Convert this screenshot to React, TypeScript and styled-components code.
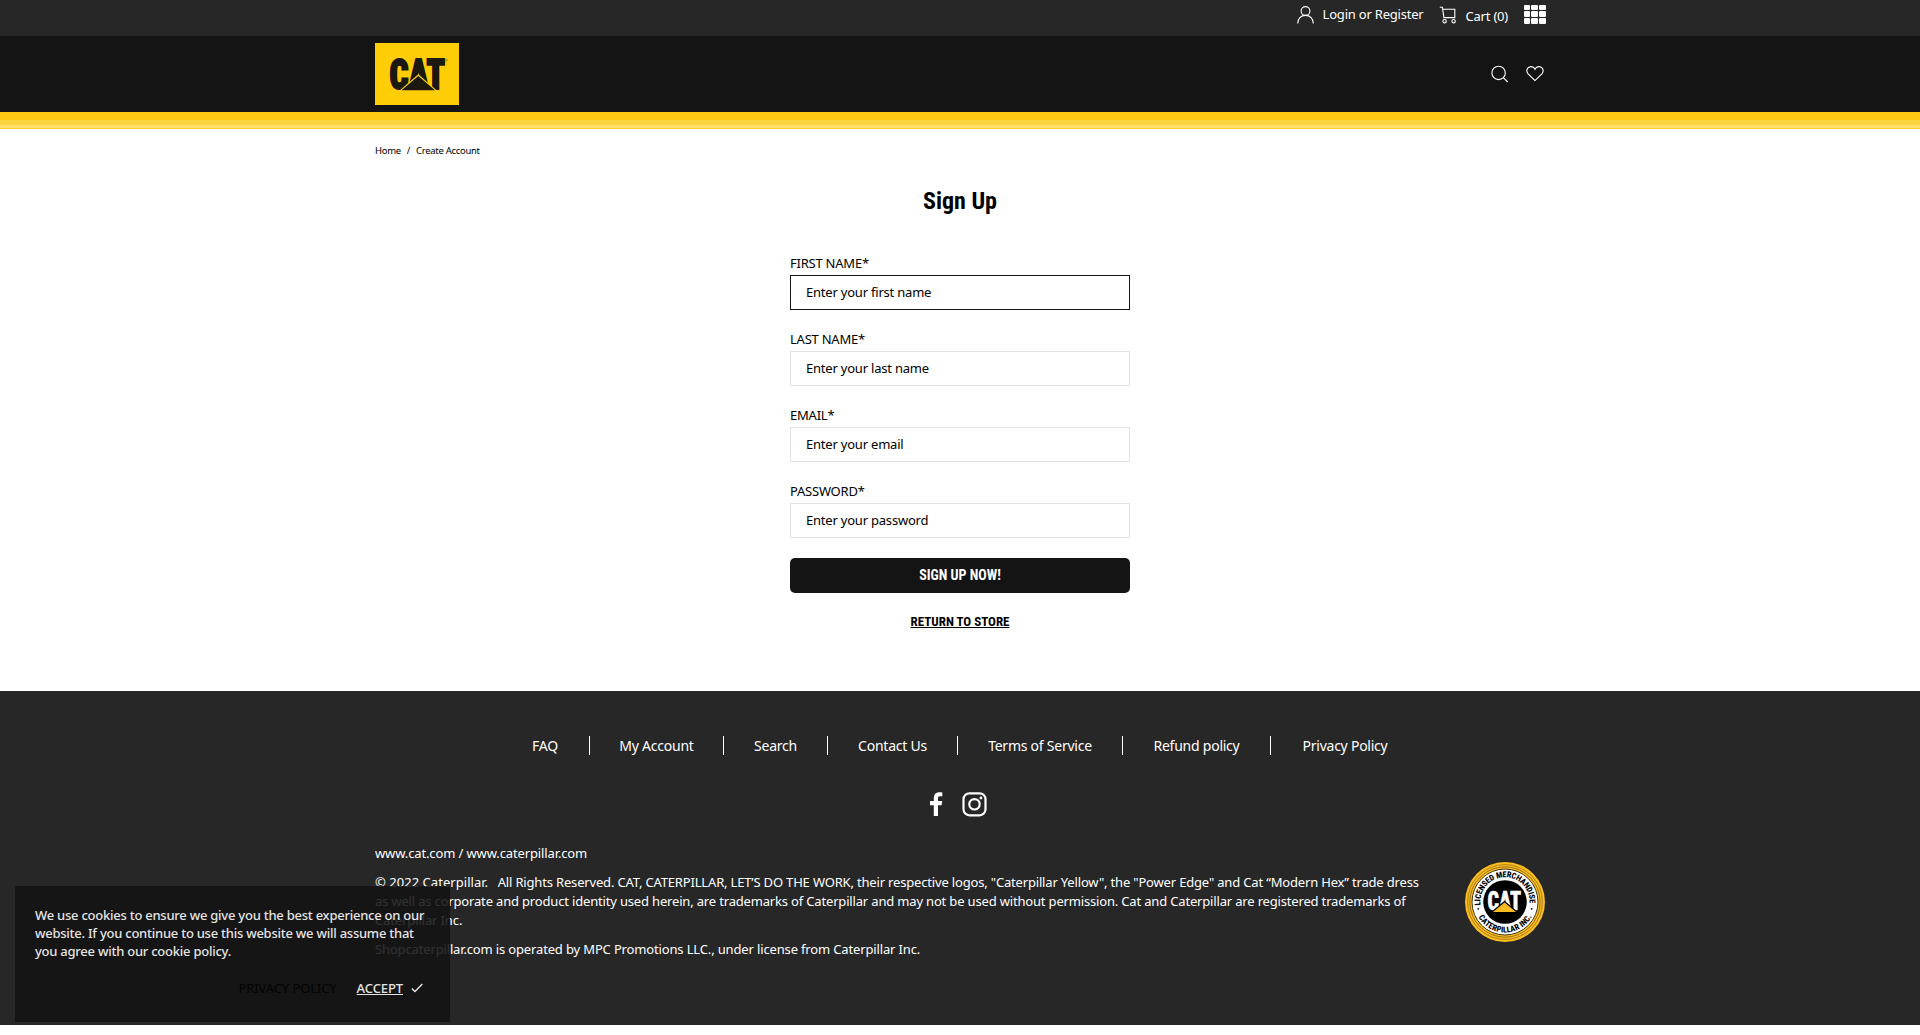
import React from 'react';
import styled, { createGlobalStyle, css } from 'styled-components';

const GlobalStyle = createGlobalStyle`
  * { box-sizing: border-box; }
  body {
    margin: 0;
    background: #fff;
    color: #000;
    font: 13px/19px "Noto Sans", "Open Sans", sans-serif;
    letter-spacing: -0.21px;
    overflow: hidden;
  }
  a { color: inherit; text-decoration: none; }
  p { margin: 0; }
`;

const condensed = css`
  font-family: "Roboto Condensed", Roboto, sans-serif;
  font-weight: 700;
  letter-spacing: 0;
`;

const Container = styled.div`
  width: 1170px;
  margin: 0 auto;
`;

const TopBar = styled.div`
  height: 36px;
  background: #272727;
  color: #fff;
`;

const TopBarInner = styled(Container)`
  height: 36px;
  display: flex;
  justify-content: flex-end;
  align-items: flex-start;
  padding-top: 5px;
`;

const TopLink = styled.a<{ $gap: number; $drop?: number; $after: number }>`
  display: flex;
  align-items: flex-start;
  gap: ${p => p.$gap}px;
  margin-right: ${p => p.$after}px;
  white-space: nowrap;
  svg { display: block; }
  span { padding-top: ${p => p.$drop ?? 0}px; }
`;

const Apps = styled.div`
  margin-right: -1px;
  display: grid;
  grid-template-columns: 6px 7px 7px;
  grid-template-rows: 5px 6px 6px;
  gap: 1px;
  i { background: #fff; border-radius: 1px; }
`;

const Header = styled.header`
  height: 76px;
  background: #141414;
  color: #fff;
`;

const HeaderInner = styled(Container)`
  height: 76px;
  display: flex;
  justify-content: space-between;
  align-items: center;
`;

const Logo = styled.a`
  width: 84px;
  height: 62px;
  margin-top: -1px;
  background: #ffcd05;
  svg { display: block; }
`;

const HeaderIcons = styled.div`
  display: flex;
  gap: 17px;
  margin: -1px 1px 0 0;
  svg { display: block; }
`;

const Stripes = styled.div`
  height: 17px;
  display: grid;
  grid-template-rows: 8px 5px 3px 1px;
  i:nth-child(1) { background: #ffcb12; }
  i:nth-child(2) { background: #fcd43f; }
  i:nth-child(3) { background: #ffe070; }
  i:nth-child(4) { background: #fdcf2c; }
`;

const Breadcrumbs = styled(Container)`
  display: flex;
  gap: 6px;
  padding-top: 14px;
  font-size: 9.5px;
  line-height: 16px;
  letter-spacing: -0.3px;
`;

const Main = styled.main`
  height: 562px;
`;

const SignUp = styled.form`
  width: 340px;
  margin: 0 auto;
  padding-top: 26px;
  display: flex;
  flex-direction: column;
`;

const Title = styled.h1`
  ${condensed}
  margin: 0 0 37px;
  font-size: 24px;
  line-height: 32px;
  text-align: center;
`;

const Field = styled.label`
  display: block;
  margin-bottom: 20px;
  line-height: 19px;
  letter-spacing: -0.23px;
`;

const Input = styled.input<{ $active?: boolean }>`
  display: block;
  width: 100%;
  height: 35px;
  margin-top: 2px;
  padding: 0 15px 1px;
  border: 1px solid ${p => (p.$active ? '#141414' : '#e3e3e3')};
  border-radius: 0;
  outline: none;
  background: #fff;
  font: inherit;
  letter-spacing: -0.21px;
  &::placeholder { color: #000; opacity: 1; }
`;

const Submit = styled.button`
  ${condensed}
  height: 35px;
  padding: 0 0 1px;
  border: 0;
  border-radius: 5px;
  background: #141414;
  color: #fff;
  font-size: 14px;
`;

const Return = styled.a`
  ${condensed}
  align-self: center;
  margin-top: 19px;
  font-size: 13px;
  text-decoration: underline;
`;

const Footer = styled.footer`
  height: 334px;
  padding-top: 45px;
  background: #272727;
  color: #fff;
`;

const FooterNav = styled.nav`
  display: flex;
  justify-content: center;
  font-size: 14px;
  letter-spacing: -0.24px;
`;

const FooterLink = styled.a<{ $width: number }>`
  width: ${p => p.$width}px;
  line-height: 19px;
  text-align: center;
  white-space: nowrap;
  & + & { border-left: 1px solid #fff; }
`;

const Social = styled.div`
  display: flex;
  justify-content: center;
  gap: 19px;
  height: 26px;
  margin-top: 37px;
  padding-right: 4px;
  svg { display: block; }
`;

const Legal = styled(Container)`
  display: flex;
  justify-content: space-between;
  margin-top: 26px;
`;

const Copy = styled.div`
  white-space: pre;
  p + p { margin-top: 10px; }
`;

const Run = styled.span<{ $track: number }>`
  letter-spacing: ${p => p.$track}px;
`;

const Seal = styled.svg`
  display: block;
  margin-top: 18px;
`;

const Cookie = styled.aside`
  position: fixed;
  left: 15px;
  top: 886px;
  width: 435px;
  height: 136px;
  padding: 20px;
  background: #141414;
  color: #fff;
  opacity: 0.88;
  font-weight: 500;
  line-height: 18px;
  letter-spacing: -0.245px;
  white-space: nowrap;
`;

const CookieActions = styled.div`
  display: flex;
  justify-content: flex-end;
  align-items: center;
  margin: 19px 7px 0 0;
`;

const Policy = styled.a`
  margin-right: 20px;
  color: #000;
  font-weight: 400;
  letter-spacing: -0.1px;
`;

const Accept = styled.a`
  margin-right: 8px;
  text-decoration: underline;
  letter-spacing: -0.1px;
`;

const stroke = { fill: 'none', stroke: 'currentColor', strokeWidth: 1.1 } as const;

const UserIcon = () => (
  <svg width="18" height="19" viewBox="0 0 18 19" {...stroke}>
    <circle cx="8.500" cy="6" r="4.400" />
    <path d="M.7 18.600c0-5 3.200-8.200 7.800-8.200s7.800 3.200 7.800 8.200" />
  </svg>
);

const CartIcon = () => (
  <svg width="18" height="19" viewBox="0 0 18 19" {...stroke}>
    <path d="M0.800 2.200h2.600l1.500 10.400h10.900V4.200H3.700" />
    <circle cx="5.600" cy="16.200" r="1.700" />
    <circle cx="14.600" cy="16.200" r="1.700" />
  </svg>
);

const SearchIcon = () => (
  <svg width="18" height="18" viewBox="0 0 18 18" {...stroke}>
    <circle cx="7.600" cy="7.900" r="6.700" />
    <path d="M12.300 12.600l4.400 4.400" />
  </svg>
);

const HeartIcon = () => (
  <svg width="18" height="18" viewBox="0 0 18 18" {...stroke}>
    <path d="M9 15.600L2.100 8.800C-.3 6 1 1.900 4.600 1.600 6.600 1.500 8.200 2.600 9 4.200 9.800 2.600 11.400 1.500 13.400 1.600 17 1.900 18.300 6 15.900 8.800z" />
  </svg>
);

const FacebookIcon = () => (
  <svg width="13" height="24" viewBox="0 0 13 24" fill="#fff">
    <path d="M3.800 24V13.200H0V9h3.800V6.200C3.800 2.200 6 .2 9.500.2c1.300 0 2.300.1 2.800.2v3.900H10c-1.600 0-2 .8-2 2V9h4.200l-.6 4.200H8V24z" />
  </svg>
);

const InstagramIcon = () => (
  <svg width="25" height="25" viewBox="0 0 25 25" fill="none" stroke="#fff" strokeWidth="2.200">
    <rect x="1.500" y="1.300" width="22" height="22" rx="6" />
    <circle cx="12.500" cy="12.300" r="5.200" />
    <circle cx="18.900" cy="6" r="1.400" fill="#fff" stroke="none" />
  </svg>
);

const CatLogo = () => (
  <svg width="84" height="62" viewBox="0 0 84 62">
    <text x="14.500" y="46.300" textLength="55.500" lengthAdjust="spacingAndGlyphs" fontFamily="Roboto Condensed, Roboto, sans-serif" fontWeight="900" fontSize="42.500" letterSpacing="0" fill="#1a1810" stroke="#1a1810" strokeWidth="2">CAT</text>
    <path d="M23.500 48.500L43.300 31.300 63 48.500z" fill="#ffcd05" />
    <path d="M26.500 47.200L43.300 33 60 47.200z" fill="#1a1810" />
    <circle cx="71.500" cy="17" r="1" fill="none" stroke="#8a7010" strokeWidth="0.600" />
  </svg>
);

const SealBadge = () => (
  <Seal width="80" height="80" viewBox="0 0 80 80">
    <defs>
      <path id="sealTop" d="M15.900 44.700A24.600 24.600 0 1 1 64.100 44.700" />
      <path id="sealBottom" d="M10.300 47A30.500 30.500 0 0 0 69.700 47" />
    </defs>
    <circle cx="40" cy="40" r="40" fill="#fbbd1f" />
    <circle cx="40" cy="40" r="37.400" fill="none" stroke="#8a6714" strokeWidth="0.700" />
    <circle cx="40" cy="40" r="35.200" fill="none" stroke="#6d5210" strokeWidth="0.700" />
    <circle cx="40" cy="40" r="33" fill="#fff" stroke="#2a2209" strokeWidth="0.900" />
    <circle cx="40" cy="40" r="21.800" fill="#000" />
    <g fontFamily="Roboto Condensed, Roboto, sans-serif" fontWeight="800" fontSize="8.200" letterSpacing="0" fill="#000">
      <text><textPath href="#sealTop" startOffset="1.500" textLength="82" lengthAdjust="spacing">LICENSED MERCHANDISE</textPath></text>
      <text><textPath href="#sealBottom" startOffset="8.500" textLength="65" lengthAdjust="spacing">CATERPILLAR INC.</textPath></text>
    </g>
    <circle cx="13.300" cy="46.800" r="0.900" />
    <circle cx="66.700" cy="46.800" r="0.900" />
    <text x="22.500" y="47.500" textLength="33.500" lengthAdjust="spacingAndGlyphs" fontFamily="Roboto Condensed, Roboto, sans-serif" fontWeight="900" fontSize="25" letterSpacing="0" fill="#fff" stroke="#fff" strokeWidth="0.600">CAT</text>
    <path d="M26 50L39.500 38.800 53 50z" fill="#000" />
    <path d="M28 50L39.500 40.500 51 50z" fill="#fbbd1f" />
  </Seal>
);

const fields = [
  ['FIRST NAME*', 'Enter your first name'],
  ['LAST NAME*', 'Enter your last name'],
  ['EMAIL*', 'Enter your email'],
  ['PASSWORD*', 'Enter your password'],
];

const footerLinks: [string, number][] = [
  ['FAQ', 88],
  ['My Account', 134],
  ['Search', 104],
  ['Contact Us', 130],
  ['Terms of Service', 165],
  ['Refund policy', 148],
  ['Privacy Policy', 149],
];

export default function App() {
  return (
    <>
      <GlobalStyle />
      <TopBar>
        <TopBarInner>
          <TopLink href="#" $gap={8} $after={16}><UserIcon /><span>Login or Register</span></TopLink>
          <TopLink href="#" $gap={8} $drop={2} $after={16}><CartIcon /><span>Cart (0)</span></TopLink>
          <Apps>{Array.from({ length: 9 }, (_, i) => <i key={i} />)}</Apps>
        </TopBarInner>
      </TopBar>
      <Header>
        <HeaderInner>
          <Logo href="#"><CatLogo /></Logo>
          <HeaderIcons><SearchIcon /><HeartIcon /></HeaderIcons>
        </HeaderInner>
      </Header>
      <Stripes><i /><i /><i /><i /></Stripes>
      <Main>
        <Breadcrumbs><a href="#">Home</a><span>/</span><span>Create Account</span></Breadcrumbs>
        <SignUp>
          <Title>Sign Up</Title>
          {fields.map(([label, placeholder], i) => (
            <Field key={label}>{label}<Input $active={i === 0} placeholder={placeholder} /></Field>
          ))}
          <Submit type="button">SIGN UP NOW!</Submit>
          <Return href="#">RETURN TO STORE</Return>
        </SignUp>
      </Main>
      <Footer>
        <FooterNav>{footerLinks.map(([label, width]) => <FooterLink href="#" key={label} $width={width}>{label}</FooterLink>)}</FooterNav>
        <Social><FacebookIcon /><InstagramIcon /></Social>
        <Legal>
          <Copy>
            <p><Run $track={-0.12}>www.cat.com / www.caterpillar.com</Run></p>
            <p>
              <Run $track={0.04}>© 2022 Caterpillar.</Run>
              <Run $track={-0.172}>&nbsp;&nbsp; All Rights Reserved. CAT, CATERPILLAR, LET’S DO THE WORK, their respective logos, "Caterpillar Yellow", the "Power Edge" and Cat “Modern Hex” trade dress</Run><br />
              <Run $track={-0.17}>as well as corporate and product identity used herein, are trademarks of Caterpillar and may not be used without permission. Cat and Caterpillar are registered trademarks of</Run><br />
              <Run $track={-0.12}>Caterpillar Inc.</Run>
            </p>
            <p><Run $track={-0.148}>Shopcaterpillar.com is operated by MPC Promotions LLC., under license from Caterpillar Inc.</Run></p>
          </Copy>
          <SealBadge />
        </Legal>
      </Footer>
      <Cookie>
        <p>
          We use cookies to ensure we give you the best experience on our<br />
          website. If you continue to use this website we will assume that<br />
          you agree with our cookie policy.
        </p>
        <CookieActions>
          <Policy href="#">PRIVACY POLICY</Policy>
          <Accept href="#">ACCEPT</Accept>
          <svg width="12" height="10" viewBox="0 0 12 10" fill="none" stroke="#fff" strokeWidth="1.400"><path d="M0.800 5.400L4 8.600 11.300 1" /></svg>
        </CookieActions>
      </Cookie>
    </>
  );
}
